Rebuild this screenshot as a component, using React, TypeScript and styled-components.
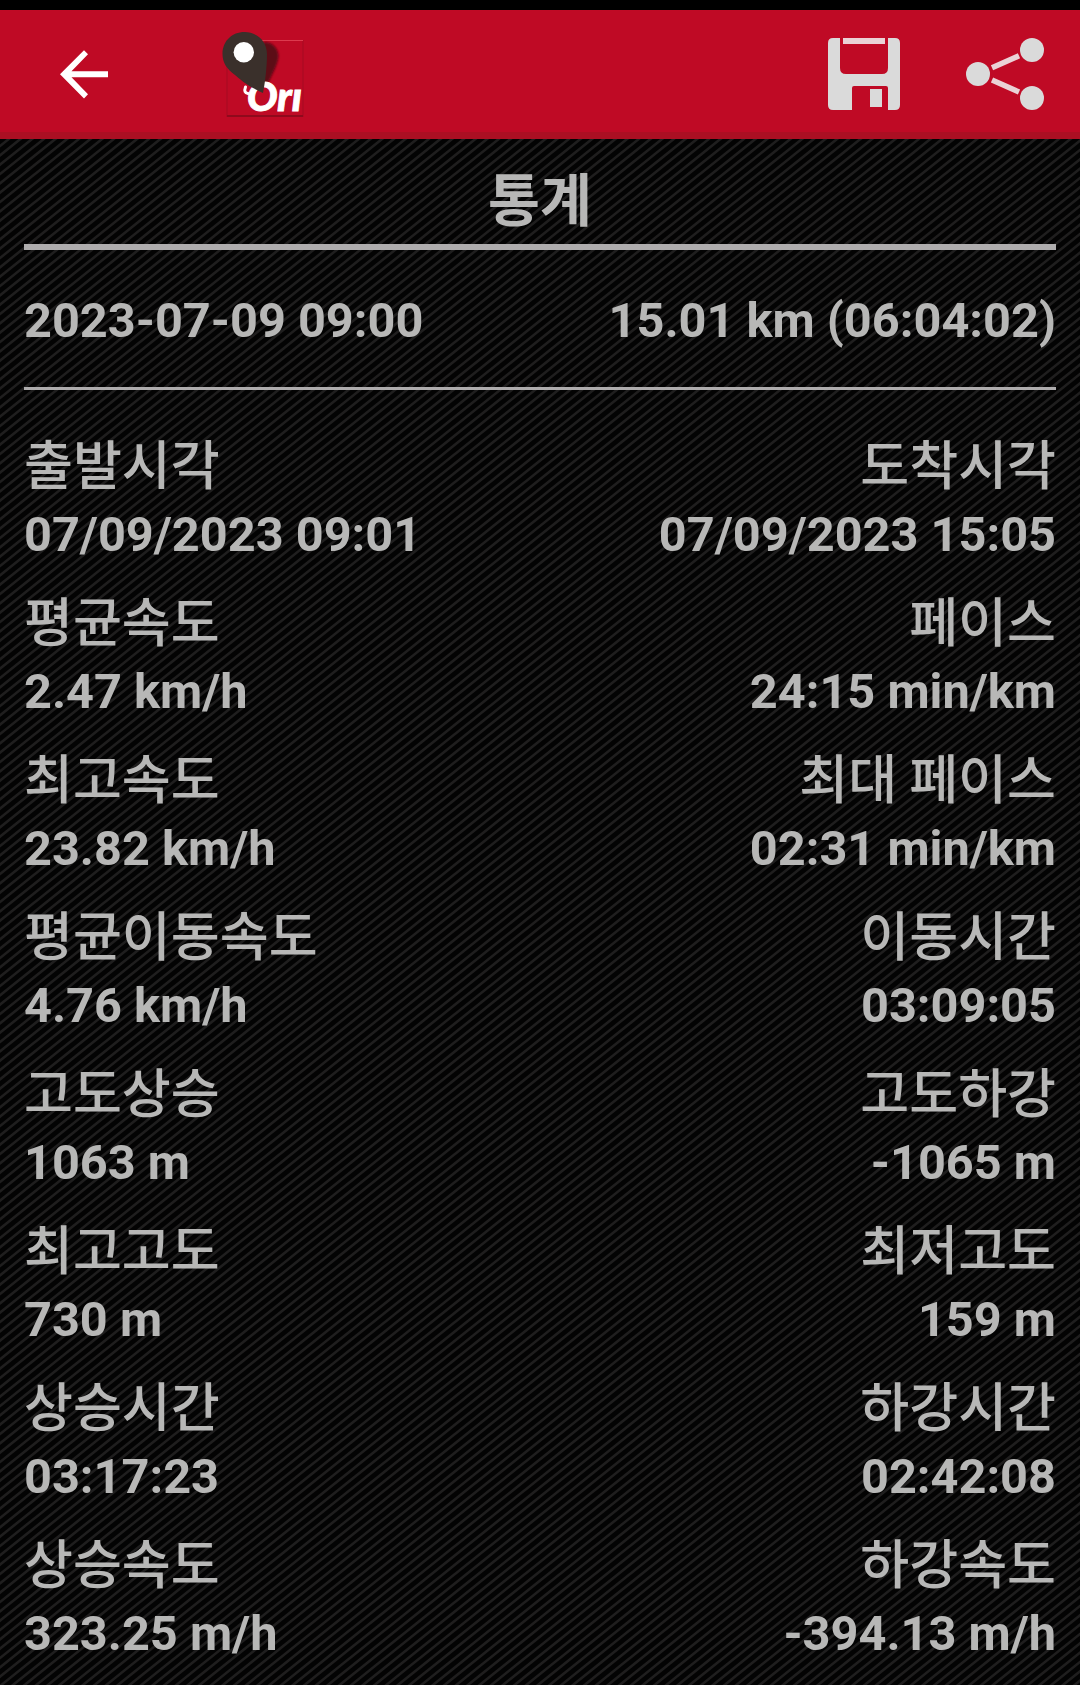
import React from "react";
import styled, { createGlobalStyle } from "styled-components";

const Global = createGlobalStyle`
  html, body { margin: 0; background: #000; }
`;
const tile = `url("data:image/svg+xml,${encodeURIComponent(
  `<svg xmlns="http://www.w3.org/2000/svg" width="35" height="28" viewBox="0 0 35 28"><path d="${[-2, -1, 0, 1, 2, 3, 4, 5, 6, 7, 8]
    .map((i) => `M-5 ${(i * 28) / 3 + 4}L40 ${(i * 28) / 3 - 32}`)
    .join("")}" stroke="#1f1e1e" stroke-width="2.5" fill="none"/></svg>`
)}")`;
const Screen = styled.div`
  width: 1080px;
  height: 1685px;
  overflow: hidden;
  display: flex;
  flex-direction: column;
  background: #030303 ${tile} 0 6px / 35px 28px;
  color: #b7b7b6;
  font-family: Roboto, "Noto Sans CJK KR", sans-serif;
`;
const StatusStrip = styled.div`
  height: 10px;
  flex: none;
  background: #000;
`;
const Toolbar = styled.header`
  box-sizing: border-box;
  height: 129px;
  flex: none;
  display: flex;
  align-items: center;
  padding: 0 34px 0 60px;
  background: #bf0a25;
  box-shadow: inset 0 -7px #ab0f23;
`;
const IconButton = styled.button<{ $gap?: number; $lift?: number }>`
  display: flex;
  padding: 0;
  border: 0;
  background: none;
  margin-left: ${(p) => p.$gap ?? 0}px;
  margin-bottom: ${(p) => p.$lift ?? 0}px;
`;
const Spacer = styled.div`
  flex: 1;
`;
const Content = styled.main`
  padding: 0 24px;
`;
const Title = styled.h1`
  margin: 0;
  height: 111px;
  box-sizing: border-box;
  padding-top: 24px;
  border-bottom: 6px solid #aeacad;
  text-align: center;
  font-size: 56.5px;
  line-height: 78px;
  font-weight: 700;
`;
const Pair = styled.div`
  display: flex;
  justify-content: space-between;
  white-space: pre;
`;
const Summary = styled(Pair)`
  box-sizing: border-box;
  height: 140px;
  padding-top: 38px;
  border-bottom: 3px solid #aeacad;
  font-size: 48.7px;
  line-height: 66px;
  font-weight: 700;
`;
const Stats = styled.section`
  padding-top: 35px;
`;
const Stat = styled.div`
  height: 157.05px;
`;
const Labels = styled(Pair)`
  font-size: 53.2px;
  line-height: 74px;
  height: 77px;
  font-weight: 500;
  font-family: "Noto Sans CJK KR", Roboto, sans-serif;
`;
const Values = styled(Pair)`
  font-size: 48.7px;
  line-height: 66px;
  font-weight: 700;
`;
const LogoSvg = styled.svg`
  overflow: visible;
`;

const BackIcon = () => (
  <svg width="48" height="49" viewBox="0 0 48 49">
    <path d="M48 21.3V27.3H11.5L28 44.3L24 48.5L0 24.3L24 0.3L28 4.3L11.5 21.3Z" fill="#fff" />
  </svg>
);
const AppLogo = () => (
  <LogoSvg width="84" height="87" viewBox="0 0 84 87">
    <defs>
      <filter id="soft" x="-20%" y="-20%" width="140%" height="140%">
        <feGaussianBlur stdDeviation="1.1" />
      </filter>
    </defs>
    <rect x="5" y="9.5" width="76" height="76" fill="none" stroke="#a50b22" />
    <path d="M40 9.5H81" stroke="#dc3a4e" />
    <path d="M5 85H81" stroke="#8f0a1c" strokeWidth="2" />
    <path d="M42 11C50 11 56.5 17 56.5 25C56 34 50 43 45 55L30 42Z" fill="#5c0714" filter="url(#soft)" />
    <path d="M23.5 56C22 60 23 62 26 62.500" stroke="#fff" strokeWidth="3" fill="none" strokeLinecap="round" />
    <g fill="#fff" stroke="#fff" strokeWidth="0.9" fontFamily="Lato, sans-serif" fontStyle="italic" fontWeight="900" fontSize="40">
      <text x="25" y="80" textLength="55" lengthAdjust="spacingAndGlyphs">Orı</text>
    </g>
    <path d="M22.5 1C35 1 45 10 45 23C45 37 43 52 41 62C33 58 24 54 13 44C5 38 0.5 32 0.5 23C0.5 10 10 1 22.5 1Z" fill="#3a302b" />
    <circle cx="21.8" cy="21.3" r="10.2" fill="#fff" />
  </LogoSvg>
);
const SaveIcon = () => (
  <svg width="72" height="72" viewBox="0 0 72 72" fill="#dadada">
    <path d="M5 0H12V30Q12 36 18 36H54Q60 36 60 30V0H67Q72 0 72 5V67Q72 72 67 72H60V50Q60 48 58 48H26Q24 48 24 50V72H5Q0 72 0 67V5Q0 0 5 0Z" />
    <path d="M15 0H57V6H15Z" fill="#ead2d6" />
    <path d="M42 51H54V69H42Z" />
  </svg>
);
const ShareIcon = () => (
  <svg width="80" height="72" viewBox="0 0 80 72" fill="#dadada">
    <path d="M26 29.8L53 17.8M26 42L53 54" stroke="#ead2d6" strokeWidth="5.5" />
    <circle cx="12" cy="36" r="12" />
    <circle cx="66" cy="12" r="12" />
    <circle cx="66" cy="60" r="12" />
  </svg>
);

const stats = [
  ["출발시각", "도착시각", "07/09/2023 09:01", "07/09/2023 15:05"],
  ["평균속도", "페이스", "2.47 km/h", "24:15 min/km"],
  ["최고속도", "최대 페이스", "23.82 km/h", "02:31 min/km"],
  ["평균이동속도", "이동시간", "4.76 km/h", "03:09:05"],
  ["고도상승", "고도하강", "1063 m", "-1065 m"],
  ["최고고도", "최저고도", "730 m", "159 m"],
  ["상승시간", "하강시간", "03:17:23", "02:42:08"],
  ["상승속도", "하강속도", "323.25 m/h", "-394.13 m/h"],
];

export default function App() {
  return (
    <Screen>
      <Global />
      <StatusStrip />
      <Toolbar>
        <IconButton aria-label="Back"><BackIcon /></IconButton>
        <IconButton $gap={114} aria-label="Home"><AppLogo /></IconButton>
        <Spacer />
        <IconButton $lift={1} aria-label="Save"><SaveIcon /></IconButton>
        <IconButton $gap={66} $lift={1} aria-label="Share"><ShareIcon /></IconButton>
      </Toolbar>
      <Content>
        <Title>통계</Title>
        <Summary><span>2023-07-09 09:00</span><span>15.01 km (06:04:02)</span></Summary>
        <Stats>
          {stats.map(([l, r, lv, rv]) => (
            <Stat key={l}>
              <Labels><span>{l}</span><span>{r}</span></Labels>
              <Values><span>{lv}</span><span>{rv}</span></Values>
            </Stat>
          ))}
        </Stats>
      </Content>
    </Screen>
  );
}
